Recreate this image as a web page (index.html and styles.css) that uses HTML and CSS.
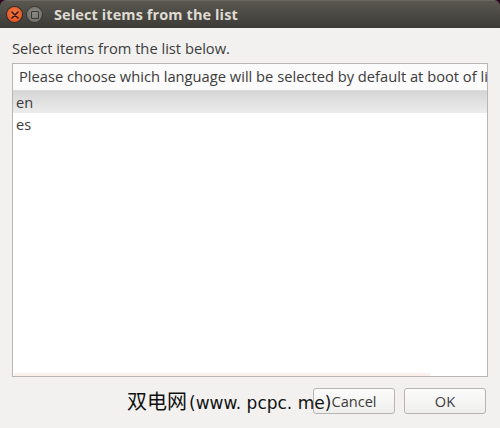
FILE: index.html
```html
<!DOCTYPE html>
<html>
<head>
<meta charset="utf-8">
<link rel="stylesheet" href="styles.css">
</head>
<body>
<div class="window">
  <div class="titlebar">
    <span class="btn-close">
      <svg width="8" height="8" viewBox="0 0 8 8"><path d="M1 1L7 7M7 1L1 7" stroke="#3a1a10" stroke-width="1.6" stroke-linecap="round"/></svg>
    </span>
    <span class="btn-max"><span class="max-square"></span></span>
    <span class="title">Select items from the list</span>
  </div>
  <div class="content">
    <div class="label">Select items from the list below.</div>
    <div class="list">
      <div class="list-header">Please choose which language will be selected by default at boot of live system</div>
      <div class="row selected">en</div>
      <div class="row">es</div>
      <div class="list-fill"><div class="faint-line"></div></div>
    </div>
    <div class="buttons">
      <button class="button">Cancel</button>
      <button class="button">OK</button>
    </div>
  </div>
  <div class="watermark"><span class="wm-cjk">双电网</span>(www. pcpc. me)</div>
</div>
</body>
</html>
```
FILE: styles.css
```css
html, body {
  margin: 0;
  padding: 0;
}
body {
  width: 500px;
  height: 428px;
  background: #2c001e;
  overflow: hidden;
}
.window {
  position: relative;
  width: 500px;
  height: 428px;
  display: flex;
  flex-direction: column;
  border-radius: 6px 6px 0 0;
  overflow: hidden;
  font-family: "Open Sans", "DejaVu Sans", sans-serif;
}
.titlebar {
  height: 28px;
  flex: 0 0 28px;
  background: linear-gradient(#5a5750, #3c3b37);
  border-top: 1px solid #6a6760;
  box-sizing: border-box;
  display: flex;
  align-items: center;
  padding-left: 7px;
}
.btn-close {
  width: 15px;
  height: 15px;
  border-radius: 50%;
  background: radial-gradient(circle at 50% 40%, #f47a4b, #df4a16);
  box-shadow: 0 0 0 1px #3a2a22;
  display: flex;
  align-items: center;
  justify-content: center;
}
.btn-max {
  width: 15px;
  height: 15px;
  margin-left: 5px;
  border-radius: 50%;
  background: radial-gradient(circle at 50% 40%, #8a8882, #6b6964);
  box-shadow: 0 0 0 1px #3a3934;
  display: flex;
  align-items: center;
  justify-content: center;
}
.max-square {
  width: 6px;
  height: 6px;
  border: 1px solid #3a3934;
  border-radius: 1px;
}
.title {
  margin-left: 12px;
  color: #dfdbd2;
  font-weight: bold;
  font-size: 14.5px;
  letter-spacing: 0.1px;
}
.content {
  flex: 1;
  background: #f2f1f0;
  display: flex;
  flex-direction: column;
  padding: 10px 12px 14px 12px;
}
.label {
  height: 20px;
  line-height: 20px;
  font-size: 14.7px;
  color: #3c3c3c;
  margin-bottom: 5px;
}
.list {
  height: 314px;
  box-sizing: border-box;
  border: 1px solid #b9b6b1;
  background: #ffffff;
  display: flex;
  flex-direction: column;
  overflow: hidden;
}
.list-header {
  height: 27px;
  flex: 0 0 27px;
  box-sizing: border-box;
  border-bottom: 1px solid #dcdcdc;
  background: #fbfbfb;
  padding-left: 6px;
  line-height: 25px;
  font-size: 14.7px;
  color: #3c3c3c;
  white-space: nowrap;
  overflow: hidden;
}
.row {
  height: 22px;
  flex: 0 0 22px;
  line-height: 22px;
  padding-left: 3px;
  font-size: 14.6px;
  color: #3c3c3c;
}
.row.selected {
  background: linear-gradient(#d6d6d6, #ececec);
}
.list-fill {
  flex: 1;
  display: flex;
  flex-direction: column;
  justify-content: flex-end;
}
.faint-line {
  width: 416px;
  height: 3px;
  margin-left: 1px;
  background: #fbf1ea;
}
.buttons {
  margin-top: 11px;
  display: flex;
  justify-content: flex-end;
  gap: 9px;
  padding-right: 2px;
}
.button {
  width: 82px;
  height: 26px;
  box-sizing: border-box;
  border: 1px solid #b8b5b0;
  border-radius: 3px;
  background: linear-gradient(#fcfcfc, #eeeeec);
  font-family: "Open Sans", "DejaVu Sans", sans-serif;
  font-size: 14.6px;
  color: #3c3c3c;
  padding: 0;
}
.watermark {
  position: absolute;
  left: 127px;
  top: 389px;
  font-family: "DejaVu Sans", "Noto Sans CJK SC", sans-serif;
  font-size: 17px;
  color: #111;
  white-space: nowrap;
  line-height: 24px;
}
.wm-cjk {
  font-family: "Noto Sans CJK SC", sans-serif;
  font-size: 20px;
  margin-right: 2px;
}
```
